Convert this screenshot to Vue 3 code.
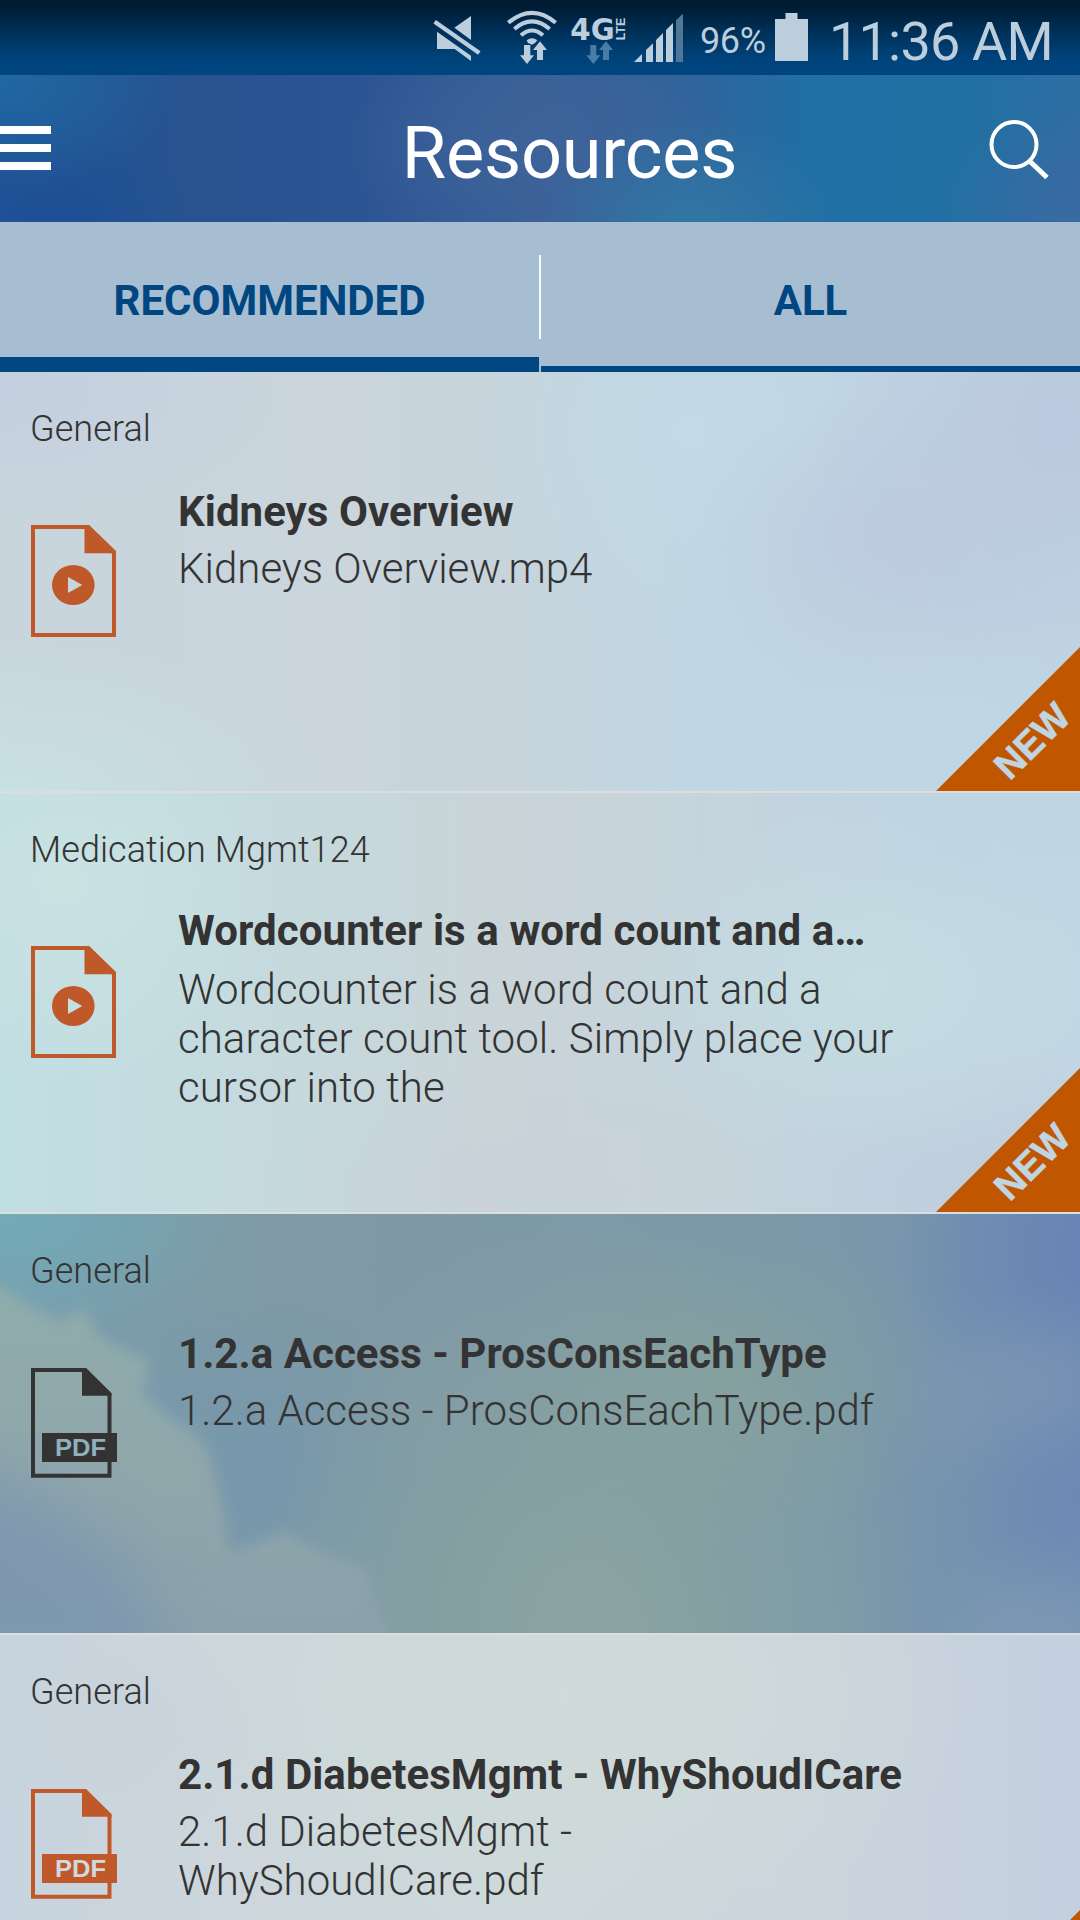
<script setup>
import { ref } from 'vue'

const tabs = ['RECOMMENDED', 'ALL']
const active = ref(0)

const items = [
  { category: 'General', title: 'Kidneys Overview', file: 'Kidneys Overview.mp4', type: 'video', isNew: true, tone: 'tone-a' },
  {
    category: 'Medication Mgmt124',
    title: 'Wordcounter is a word count and a…',
    file: 'Wordcounter is a word count and a character count tool. Simply place your cursor into the',
    type: 'video',
    isNew: true,
    tone: 'tone-b',
    long: true,
  },
  { category: 'General', title: '1.2.a Access - ProsConsEachType', file: '1.2.a Access - ProsConsEachType.pdf', type: 'pdf', isNew: false, tone: 'tone-c' },
  { category: 'General', title: '2.1.d DiabetesMgmt - WhyShoudICare', file: '2.1.d DiabetesMgmt - WhyShoudICare.pdf', type: 'pdf', isNew: true, tone: 'tone-d' },
]
</script>

<template>
  <div class="screen">
    <div class="status">
      <svg class="mute" width="50" height="75" viewBox="36 0 150 225">
        <path d="M153 48V120L103 83ZM51 95L153 167V183L104 147H51Z" />
        <path d="M44 65L178 159" fill="none" stroke="#bccddc" stroke-width="13" />
      </svg>
      <svg class="wifi" width="52" height="75" viewBox="258 0 156 225">
        <g fill="none" stroke="#bccddc" stroke-width="12">
          <path d="M265 68Q336 9 407 68" />
          <path d="M283 87Q336 41 389 87" />
          <path d="M303 106Q336 77 369 106" />
        </g>
        <path d="M320 121Q336 108 352 121L345 129L336 134L324 129Z" />
        <path d="M312 135H331V166H342L321 192L300 166H312ZM351 180V150H339L360 124L381 150H369V180Z" />
      </svg>
      <svg class="net" width="60" height="75" viewBox="450 0 180 225">
        <text x="451" y="120" font-size="91" font-weight="700" textLength="133" lengthAdjust="spacingAndGlyphs" font-family="DejaVu Sans, sans-serif">4G</text>
        <text transform="translate(615 121) rotate(-90)" font-size="38" font-weight="700" textLength="68" lengthAdjust="spacingAndGlyphs" font-family="Liberation Sans, sans-serif">LTE</text>
        <path fill="#497da8" d="M511 135H529V166H541L520 192L499 166H511ZM549 180V150H537L558 124L579 150H567V180Z" />
      </svg>
      <svg class="signal" width="51" height="75" viewBox="639 0 153 225">
        <path d="M642 186L666 162V186ZM678 186V150L699 130V186ZM708 186V120L729 99V186ZM738 186V90L759 69V186Z" />
        <path fill="#4f7898" d="M768 186V61L789 41V186Z" />
      </svg>
      <span class="percent">96%</span>
      <svg class="battery" width="33" height="75" viewBox="0 0 33 75">
        <path d="M10.500 13H22.500V19H33V61H0V19H10.500Z" />
      </svg>
      <span class="clock">11:36 AM</span>
    </div>

    <header class="header">
      <button class="menu" aria-label="Menu"><i></i><i></i><i></i></button>
      <h1>Resources</h1>
      <svg class="search" width="64" height="64" viewBox="0 0 64 64" fill="none" stroke="#fff" stroke-width="4">
        <circle cx="29" cy="28.500" r="22.500" />
        <path d="M44.500 45L62 61.500" stroke-width="5" />
      </svg>
    </header>

    <nav class="tabs">
      <div v-for="(tab, i) in tabs" :key="tab" class="tab" :class="{ active: active === i }" @click="active = i">{{ tab }}</div>
    </nav>

    <main class="list">
      <article v-for="item in items" :key="item.title" class="item" :class="[item.tone, { long: item.long }]">
        <svg v-if="item.tone === 'tone-c'" class="clouds" viewBox="0 0 1080 419" preserveAspectRatio="none">
          <defs>
            <filter id="soft" x="-10%" y="-10%" width="120%" height="120%"><feGaussianBlur stdDeviation="7" /></filter>
            <filter id="softer" x="-40%" y="-40%" width="180%" height="180%"><feGaussianBlur stdDeviation="30" /></filter>
            <linearGradient id="haze" x1="0" y1="0" x2="0" y2="1">
              <stop offset="0" stop-color="#90adab" />
              <stop offset=".5" stop-color="#8fa6ab" />
              <stop offset="1" stop-color="#8ba1ab" />
            </linearGradient>
          </defs>
          <path filter="url(#soft)" fill="url(#haze)" d="M-30 60L5 75L30 92L62 108L84 94L96 120L124 137L149 145L143 180L170 205L190 215L208 236L222 285L229 339L266 326L283 318L320 337L365 355L376 390L400 450H-30Z" />
          <path filter="url(#softer)" fill="#7994b1" opacity=".75" d="M-80 240L40 280L130 350L190 480H-80Z" />
          <path filter="url(#softer)" fill="#8099b3" opacity=".6" d="M905 160L950 128L1000 112L1110 120V215L1010 230L930 235Z" />
          <path filter="url(#softer)" fill="#839db5" opacity=".6" d="M960 390L1030 360L1140 370V480H940Z" />
        </svg>

        <p class="category">{{ item.category }}</p>
        <div class="body">
          <svg v-if="item.type === 'video'" class="doc" width="86" height="112" viewBox="0 0 86 112">
            <path fill="none" stroke="currentColor" stroke-width="4" d="M2 2H57L83 28V110H2Z" />
            <path fill="currentColor" d="M53.500 0H58L85 26V28.300H53.500Z" />
            <path fill="currentColor" fill-rule="evenodd" d="M21 60A21.300 20 0 0 1 63.600 60A21.300 20 0 0 1 21 60ZM37 52V68L51.300 60Z" />
          </svg>
          <svg v-else class="doc pdf" width="86" height="110" viewBox="0 0 86 110">
            <path fill="none" stroke="currentColor" stroke-width="4" d="M2 2H54L78.500 26V107.800H2Z" />
            <path fill="currentColor" d="M51 0H55L80.500 25.500V27.700H51ZM11 65H86V94H11Z" />
            <text x="24" y="88.300" font-size="24" font-weight="700" textLength="51" lengthAdjust="spacingAndGlyphs">PDF</text>
          </svg>
          <div class="texts">
            <h2>{{ item.title }}</h2>
            <p>{{ item.file }}</p>
          </div>
        </div>
        <div v-if="item.isNew" class="ribbon"><span>NEW</span></div>
      </article>
    </main>
  </div>
</template>

<style>
body {
  margin: 0;
  overflow: hidden;
}
</style>

<style scoped>
.screen {
  width: 1080px;
  height: 1920px;
  overflow: hidden;
  display: flex;
  flex-direction: column;
  font-family: Roboto, "Noto Sans", sans-serif;
  color: #333;
}
h1, h2, p { margin: 0; }

.status {
  flex: none;
  height: 75px;
  display: flex;
  align-items: center;
  padding-left: 432px;
  box-sizing: border-box;
  background: linear-gradient(#001a31 0, #001c35 10%, #003058 42%, #00437b 78%, #004581 100%);
  color: #bccddc;
  white-space: nowrap;
}
.status svg { flex: none; fill: #bccddc; }
.wifi { margin-left: 24px; }
.net { margin-left: 12px; }
.signal { margin-left: 3px; }
.percent {
  width: 75px;
  margin-left: 16px;
  box-sizing: border-box;
  font-size: 36px;
  line-height: 41px;
  padding-top: 7px;
  letter-spacing: -0.4px;
}
.clock {
  margin-left: 21px;
  font-size: 54px;
  line-height: 64px;
  padding-top: 9px;
  font-weight: 400;
  letter-spacing: -0.8px;
}

.header {
  flex: none;
  height: 147px;
  display: flex;
  justify-content: space-between;
  align-items: center;
  padding-right: 31px;
  padding-bottom: 2px;
  box-sizing: border-box;
  color: #fff;
  background:
    radial-gradient(ellipse 180px 120px at 0 0, #2069a3, transparent),
    radial-gradient(ellipse 130px 100px at 60px 150px, #1e4f95, transparent),
    radial-gradient(ellipse 150px 110px at 690px 150px, #3278a5, transparent),
    radial-gradient(ellipse 150px 120px at 1090px 140px, #3a6aa2, transparent),
    radial-gradient(ellipse 200px 110px at 540px 70px, #3d639a, transparent),
    linear-gradient(90deg, #1f5396 0, #28538f 18%, #2a5492 32%, #3b6098 50%, #2f649b 64%, #206fa5 75%, #2270a3 90%, #2d6da2 100%);
}
.menu {
  display: flex;
  flex-direction: column;
  gap: 10px;
  width: 51px;
  padding: 0;
  border: 0;
  background: none;
}
.menu i { height: 8px; background: #fff; }
h1 {
  font-size: 72px;
  line-height: 84px;
  font-weight: 400;
  margin-left: 103px;
  padding-top: 13px;
  letter-spacing: -0.2px;
}

.tabs {
  flex: none;
  position: relative;
  display: flex;
  gap: 2px;
  height: 150px;
  background: #a6bdd2;
}
.tabs::after {
  content: "";
  position: absolute;
  left: 539px;
  top: 33px;
  width: 2px;
  height: 84px;
  background: #f7f9fb;
}
.tab {
  flex: 1;
  box-sizing: border-box;
  border-bottom: 6px solid #004680;
  color: #004680;
  font-size: 42px;
  font-weight: 700;
  line-height: 49px;
  padding-top: 54px;
  text-align: center;
}
.tab.active { border-bottom-width: 15px; }

.item {
  position: relative;
  box-sizing: border-box;
  height: 421px;
  border-bottom: 2px solid #dcdddd;
  padding: 36px 30px 0;
  isolation: isolate;
  background-clip: padding-box;
}
.category {
  font-size: 36px;
  line-height: 42px;
  font-weight: 300;
  letter-spacing: 0.06px;
}
.body { display: flex; padding: 33px 0 0 1px; }
.doc { flex: none; margin-top: 42px; color: #c05929; }
.doc.pdf { margin-top: 43px; }
.doc text { font-family: "Liberation Sans", Arial, sans-serif; fill: #d0d8e0; }
.texts { width: 750px; margin-left: 61px; }
h2 {
  font-size: 42px;
  line-height: 57px;
  font-weight: 700;
  white-space: nowrap;
  letter-spacing: 0.04px;
}
.texts p {
  font-size: 42px;
  line-height: 49px;
  padding-top: 4px;
  font-weight: 300;
}
.long h2 { margin-top: -2px; padding-bottom: 2px; letter-spacing: 0.09px; }
.long .texts p { letter-spacing: 0.06px; }

.ribbon {
  position: absolute;
  right: 0;
  bottom: 0;
  width: 144px;
  height: 144px;
  background: #c05600;
  clip-path: polygon(100% 0, 100% 100%, 0 100%);
}
.ribbon span {
  position: absolute;
  left: 36px;
  top: 71px;
  width: 120px;
  line-height: 46px;
  text-align: center;
  font-family: "Liberation Sans", Arial, sans-serif;
  font-size: 38px;
  font-weight: 700;
  color: #c0d5e2;
  -webkit-text-stroke: 0.6px #c0d5e2;
  transform: rotate(-45deg);
}

.tone-a {
  background-color: #c4d3df;
  background-image:
    radial-gradient(ellipse 330px 150px at 0 419px, #c8e1e3, transparent),
    radial-gradient(ellipse 260px 260px at 1060px 50px, #bbc8df, transparent),
    radial-gradient(ellipse 200px 150px at 890px 170px, #bdcbdf, transparent),
    radial-gradient(ellipse 220px 240px at 690px 60px, #c1dae5, transparent),
    radial-gradient(ellipse 260px 120px at 930px 390px, #bfd7e3, transparent),
    radial-gradient(ellipse 300px 120px at 0 20px, #c4cfdf, transparent),
    linear-gradient(90deg, #c8d5dd 0, #cad5dc 32%, #c7d4dc 48%, #c0d6e2 64%, #bfd4e2 100%);
}
.tone-b {
  background-color: #c6d4dc;
  background-image:
    radial-gradient(ellipse 220px 200px at 60px 90px, #c9e2e2, transparent),
    radial-gradient(ellipse 280px 130px at 1020px 10px, #bdd5e3, transparent),
    radial-gradient(ellipse 250px 180px at 870px 190px, #c3dde2, transparent),
    radial-gradient(ellipse 300px 150px at 1040px 400px, #bfccdd, transparent),
    radial-gradient(ellipse 300px 130px at 560px 400px, #c8d2d9, transparent),
    linear-gradient(90deg, #c1dee3 0, #c4dbdf 20%, #c9d4d8 46%, #c4d4de 72%, #c1d6e3 100%);
}
.tone-c {
  background-color: #7e9ba9;
  background-image:
    radial-gradient(ellipse 250px 130px at 0 0, #73abb7, transparent),
    radial-gradient(ellipse 330px 420px at 590px 420px, #8aa5a0, transparent),
    radial-gradient(ellipse 240px 160px at 720px 170px, #839f9f, transparent),
    radial-gradient(ellipse 200px 230px at 1100px 40px, #6783b5, transparent),
    radial-gradient(ellipse 150px 160px at 1100px 270px, #6b89b4, transparent),
    radial-gradient(ellipse 180px 190px at 250px 260px, #7697ad, transparent),
    linear-gradient(90deg, #779daf 0, #7f9aa4 25%, #7e99a7 55%, #7b98aa 78%, #7391b0 93%, #6f8db3 100%);
}
.tone-c .doc { color: #333; }
.tone-c .doc text { fill: #8fb0bc; }
.tone-d {
  background-color: #cdd7dc;
  background-image:
    radial-gradient(ellipse 420px 240px at 560px 60px, #cfdbd8, transparent),
    radial-gradient(ellipse 200px 100px at 130px 90px, #c8d3dc, transparent),
    linear-gradient(90deg, #c7d3de 0, #ccd6dc 20%, #cdd9da 48%, #cbd5dd 75%, #c4cfe0 100%);
}
.clouds {
  position: absolute;
  inset: 0;
  width: 1080px;
  height: 419px;
  z-index: -1;
}
</style>
